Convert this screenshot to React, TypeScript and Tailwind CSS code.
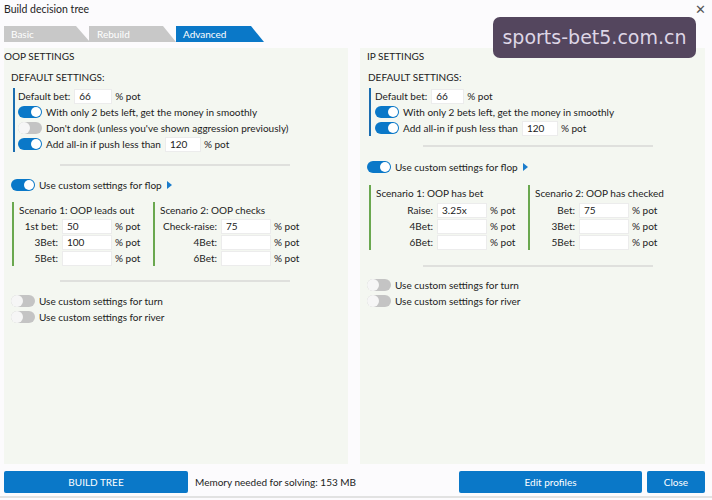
import React from "react";

const F = { fontFamily: "Lato, 'Noto Sans', sans-serif" };

function Toggle({ on }: { on: boolean }) {
  return on ? (
    <div className="w-[24px] h-[12px] rounded-full bg-[#0a78c8] relative shrink-0">
      <div className="absolute right-[1px] top-[1px] w-[10px] h-[10px] rounded-full bg-white" />
    </div>
  ) : (
    <div className="w-[24px] h-[12px] rounded-full bg-[#c4c4c4] relative shrink-0">
      <div className="absolute left-0 top-0 w-[12px] h-[12px] rounded-full bg-[#f6f6f6]" />
    </div>
  );
}

function Input({ v, w }: { v: string; w: string }) {
  return (
    <div className={`${w} h-[15px] bg-white border border-[#ececec] pl-[4px] leading-[13px] text-[10px] shrink-0`}>{v}</div>
  );
}

function ToggleRow({ on, children }: { on: boolean; children: React.ReactNode }) {
  return (
    <div className="flex items-center h-[16px] gap-[4px]">
      <Toggle on={on} />
      <div className="flex items-center whitespace-nowrap">{children}</div>
    </div>
  );
}

function Divider({ w }: { w: string }) {
  return <div className={`${w} h-[2px] bg-[#dfe0dd] ml-[56px]`} />;
}

function Scenario({
  title,
  rows,
  labelW,
  w,
  titleMb,
}: {
  title: string;
  rows: [string, string][];
  labelW: string;
  w: string;
  titleMb: string;
}) {
  return (
    <div className={`${w} shrink-0`}>
      <div className="border-l-[2px] border-[#6aa84f] pl-[5px] flex flex-col w-fit">
        <div className={`h-[16px] leading-[16px] whitespace-nowrap ${titleMb}`}>{title}</div>
        {rows.map(([l, v]) => (
          <div key={l} className="flex items-center h-[16px]">
            <div className={`${labelW} shrink-0 text-right pr-[4px] whitespace-nowrap`}>{l}</div>
            <Input v={v} w="w-[50px]" />
            <div className="pl-[3px] whitespace-nowrap">% pot</div>
          </div>
        ))}
      </div>
    </div>
  );
}

function Flop() {
  return (
    <div className="flex items-center h-[16px] gap-[4px]">
      <Toggle on={true} />
      <span>Use custom settings for flop</span>
      <svg width="5" height="8" viewBox="0 0 5 8" className="ml-[1px]">
        <path d="M0 0 L5 4 L0 8 Z" fill="#1a7ccc" />
      </svg>
    </div>
  );
}

export default function App() {
  return (
    <div
      className="w-[712px] h-[500px] bg-[#fcfbfd] text-[#222] text-[10px] relative overflow-hidden"
      style={F}
    >
      <div className="flex items-center justify-between h-[18px] pl-[4px] pr-[6px] pt-[1px]">
        <span className="text-[10.5px]">Build decision tree</span>
        <span className="text-[13px] text-[#555] leading-none">✕</span>
      </div>
      {/* tabs */}
      <div className="flex h-[16px] mt-[8px] ml-[4px]">
        <div
          className="w-[86px] bg-[#c8c8c8] text-white pl-[7px] leading-[16px]"
          style={{ clipPath: "polygon(0 0, 72px 0, 86px 100%, 0 100%)" }}
        >
          Basic
        </div>
        <div
          className="w-[87px] bg-[#c8c8c8] text-white pl-[8px] leading-[16px] -ml-[1px]"
          style={{ clipPath: "polygon(0 0, 74px 0, 87px 100%, 0 100%)" }}
        >
          Rebuild
        </div>
        <div
          className="w-[88px] bg-[#0a78c8] text-white pl-[7px] leading-[16px]"
          style={{ clipPath: "polygon(0 0, 75px 0, 88px 100%, 0 100%)" }}
        >
          Advanced
        </div>
      </div>

      <div className="flex gap-[12px] px-[4px] mt-[6px] h-[416px]">
        {/* OOP */}
        <div className="w-[344px] bg-[#f4f7f1] flex flex-col">
          <div className="h-[16px] leading-[16px]">OOP SETTINGS</div>
          <div className="pl-[7px] mt-[5px] h-[16px] leading-[16px]">DEFAULT SETTINGS:</div>
          <div className="ml-[9px] mt-[3px] border-l-[2px] border-[#1a6db0] pl-[3px] flex flex-col">
            <div className="flex items-center h-[16px]">
              <span className="pr-[4px]">Default bet:</span>
              <Input v="66" w="w-[38px]" />
              <span className="pl-[3px]">% pot</span>
            </div>
            <ToggleRow on={true}>With only 2 bets left, get the money in smoothly</ToggleRow>
            <ToggleRow on={false}>Don't donk (unless you've shown aggression previously)</ToggleRow>
            <ToggleRow on={true}>
              <span className="pr-[4px]">Add all-in if push less than</span>
              <Input v="120" w="w-[36px]" />
              <span className="pl-[3px]">% pot</span>
            </ToggleRow>
          </div>
          <div className="mt-[12px]">
            <Divider w="w-[230px]" />
          </div>
          <div className="ml-[7px] mt-[11px]">
            <Flop />
          </div>
          <div className="flex ml-[8px] mt-[9px]">
            <Scenario
              title="Scenario 1: OOP leads out"
              labelW="w-[43px]"
              w="w-[141px]"
              titleMb=""
              rows={[
                ["1st bet:", "50"],
                ["3Bet:", "100"],
                ["5Bet:", ""],
              ]}
            />
            <Scenario
              title="Scenario 2: OOP checks"
              labelW="w-[61px]"
              w="w-[180px]"
              titleMb=""
              rows={[
                ["Check-raise:", "75"],
                ["4Bet:", ""],
                ["6Bet:", ""],
              ]}
            />
          </div>
          <div className="mt-[14px]">
            <Divider w="w-[230px]" />
          </div>
          <div className="ml-[7px] mt-[11px] flex flex-col">
            <ToggleRow on={false}>Use custom settings for turn</ToggleRow>
            <ToggleRow on={false}>Use custom settings for river</ToggleRow>
          </div>
        </div>

        {/* IP */}
        <div className="w-[345px] bg-[#f4f7f1] flex flex-col pl-[7px]">
          <div className="h-[16px] leading-[16px]">IP SETTINGS</div>
          <div className="pl-[1px] mt-[5px] h-[16px] leading-[16px]">DEFAULT SETTINGS:</div>
          <div className="ml-[2px] mt-[3px] border-l-[2px] border-[#1a6db0] pl-[4px] flex flex-col">
            <div className="flex items-center h-[16px]">
              <span className="pr-[4px]">Default bet:</span>
              <Input v="66" w="w-[33px]" />
              <span className="pl-[3px]">% pot</span>
            </div>
            <ToggleRow on={true}>With only 2 bets left, get the money in smoothly</ToggleRow>
            <ToggleRow on={true}>
              <span className="pr-[4px]">Add all-in if push less than</span>
              <Input v="120" w="w-[36px]" />
              <span className="pl-[3px]">% pot</span>
            </ToggleRow>
          </div>
          <div className="mt-[9px]">
            <Divider w="w-[230px]" />
          </div>
          <div className="mt-[12px]">
            <Flop />
          </div>
          <div className="flex ml-[2px] mt-[10px]">
            <Scenario
              title="Scenario 1: OOP has bet"
              labelW="w-[61px]"
              w="w-[159px]"
              titleMb="mb-[1px]"
              rows={[
                ["Raise:", "3.25x"],
                ["4Bet:", ""],
                ["6Bet:", ""],
              ]}
            />
            <Scenario
              title="Scenario 2: OOP has checked"
              labelW="w-[44px]"
              w="w-[170px]"
              titleMb="mb-[1px]"
              rows={[
                ["Bet:", "75"],
                ["3Bet:", ""],
                ["5Bet:", ""],
              ]}
            />
          </div>
          <div className="mt-[15px]">
            <Divider w="w-[230px]" />
          </div>
          <div className="mt-[10px] flex flex-col">
            <ToggleRow on={false}>Use custom settings for turn</ToggleRow>
            <ToggleRow on={false}>Use custom settings for river</ToggleRow>
          </div>
        </div>
      </div>

      {/* bottom bar */}
      <div className="flex items-center pl-[4px] pr-[7px] mt-[7px] h-[22px]">
        <div className="w-[184px] h-[22px] bg-[#0a78c8] rounded-[2px] text-white flex items-center justify-center">
          BUILD TREE
        </div>
        <div className="ml-[7px]">Memory needed for solving: 153 MB</div>
        <div className="flex-1" />
        <div className="w-[183px] h-[22px] bg-[#0a78c8] rounded-[2px] text-white flex items-center justify-center">
          Edit profiles
        </div>
        <div className="ml-[5px] w-[58px] h-[22px] bg-[#0a78c8] rounded-[2px] text-white flex items-center justify-center">
          Close
        </div>
      </div>
      <div className="absolute left-0 right-0 bottom-[2px] h-[2px] bg-[#e2e2e2]" />

      {/* watermark overlay */}
      <div
        className="absolute left-[493px] top-[17px] w-[203px] h-[41px] rounded-[7px] bg-[#54465e] text-[#ded6e6] text-[19px] flex items-center justify-center"
        style={{ fontFamily: "'DejaVu Sans', sans-serif" }}
      >
        sports-bet5.com.cn
      </div>
    </div>
  );
}
